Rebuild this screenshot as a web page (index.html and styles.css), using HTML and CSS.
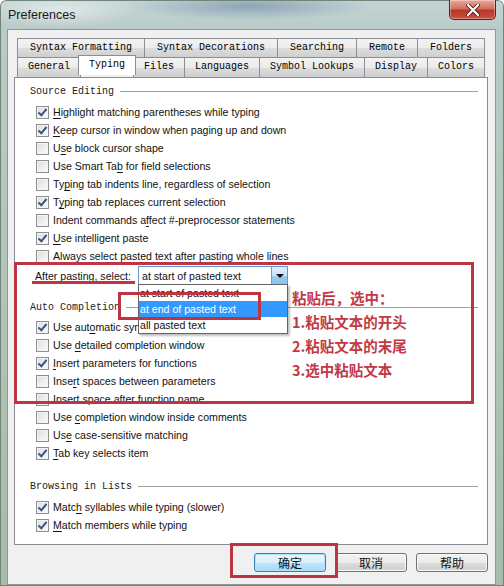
FILE: index.html
```html
<!DOCTYPE html>
<html lang="en">

<head>
    <meta charset="UTF-8">
    <title>Preferences</title>
    <link rel="stylesheet" href="styles.css">
</head>

<body>
    <div class="window">
        <div class="titlebar">
            <span class="title">Preferences</span>
            <div class="close-btn">
                <svg width="14" height="12" viewBox="0 0 14 12">
                    <path d="M2 1 L12 11 M12 1 L2 11" stroke="#6b1b1b" stroke-width="4" stroke-linecap="round" />
                    <path d="M2 1 L12 11 M12 1 L2 11" stroke="#ffffff" stroke-width="2.2" stroke-linecap="round" />
                </svg>
            </div>
        </div>

        <div class="client">
            <div class="tabs">
                <div class="tab-row">
                    <div class="tab">Syntax Formatting</div>
                    <div class="tab">Syntax Decorations</div>
                    <div class="tab">Searching</div>
                    <div class="tab">Remote</div>
                    <div class="tab">Folders</div>
                </div>
                <div class="tab-row">
                    <div class="tab">General</div>
                    <div class="tab active">Typing</div>
                    <div class="tab">Files</div>
                    <div class="tab">Languages</div>
                    <div class="tab">Symbol Lookups</div>
                    <div class="tab">Display</div>
                    <div class="tab">Colors</div>
                </div>
            </div>

            <div class="panel">
                <div class="group-title"><span>Source Editing</span></div>
                <div class="check on"><span class="box"></span><span class="text"><u>H</u>ighlight matching parentheses while typing</span></div>
                <div class="check on"><span class="box"></span><span class="text"><u>K</u>eep cursor in window when paging up and down</span></div>
                <div class="check"><span class="box"></span><span class="text">U<u>s</u>e block cursor shape</span></div>
                <div class="check"><span class="box"></span><span class="text">Use Smart Ta<u>b</u> for field selections</span></div>
                <div class="check"><span class="box"></span><span class="text">Ty<u>p</u>ing tab indents line, regardless of selection</span></div>
                <div class="check on"><span class="box"></span><span class="text">T<u>y</u>ping tab replaces current selection</span></div>
                <div class="check"><span class="box"></span><span class="text">Indent commands a<u>f</u>fect #-preprocessor statements</span></div>
                <div class="check on"><span class="box"></span><span class="text"><u>U</u>se intelligent paste</span></div>
                <div class="check"><span class="box"></span><span class="text">A<u>l</u>ways select pasted text after pasting whole lines</span></div>

                <div class="paste-row">
                    <span class="paste-label"><u>A</u>fter pasting, select:</span>
                    <div class="combo">
                        <span>at start of pasted text</span>
                        <span class="combo-btn"><span class="arrow"></span></span>
                    </div>
                </div>

                <div class="group-title second"><span>Auto Completion</span></div>
                <!-- the rest of this label sits under the open list -->
                <div class="check on"><span class="box"></span><span class="text">Use aut<u>o</u>matic syn</span></div>
                <div class="check"><span class="box"></span><span class="text">Use <u>d</u>etailed completion window</span></div>
                <div class="check on"><span class="box"></span><span class="text"><u>I</u>nsert parameters for functions</span></div>
                <div class="check"><span class="box"></span><span class="text">Inse<u>r</u>t spaces between parameters</span></div>
                <div class="check"><span class="box"></span><span class="text">Insert space after function name</span></div>
                <div class="check"><span class="box"></span><span class="text">Use <u>c</u>ompletion window inside comments</span></div>
                <div class="check"><span class="box"></span><span class="text">Us<u>e</u> case-sensitive matching</span></div>
                <div class="check on"><span class="box"></span><span class="text"><u>T</u>ab key selects item</span></div>

                <div class="group-title third"><span>Browsing in Lists</span></div>
                <div class="check on"><span class="box"></span><span class="text">Matc<u>h</u> syllables while typing (slower)</span></div>
                <div class="check on"><span class="box"></span><span class="text"><u>M</u>atch members while typing</span></div>
            </div>

            <div class="buttons">
                <button class="btn default">确定</button>
                <button class="btn">取消</button>
                <button class="btn">帮助</button>
            </div>
        </div>

        <!-- dropdown list of the combo, open -->
        <div class="dropdown">
            <div class="item">at start of pasted text</div>
            <div class="item selected">at end of pasted text</div>
            <div class="item">all pasted text</div>
        </div>

        <!-- red annotations -->
        <div class="mark mark-area"></div>
        <div class="mark mark-item"></div>
        <div class="mark mark-ok"></div>
        <div class="mark-line"></div>

        <div class="note">
            <p>粘贴后，选中：</p>
            <p>1.粘贴文本的开头</p>
            <p>2.粘贴文本的末尾</p>
            <p>3.选中粘贴文本</p>
        </div>
    </div>
</body>

</html>
```

FILE: styles.css
```css
body {
    margin: 0;
    padding: 0;
    font-family: "Liberation Sans", Arial, sans-serif;
    font-size: 10.6px;
    color: #111;
}

.window {
    position: relative;
    width: 504px;
    height: 586px;
    overflow: hidden;
    background:
        radial-gradient(ellipse 120px 14px at 250px 6px, rgba(80, 110, 150, 0.45), transparent),
        radial-gradient(ellipse 80px 18px at 60px 10px, rgba(255, 255, 255, 0.5), transparent),
        linear-gradient(to bottom, #c4d4d6 0px, #b9cbc8 30px, #b2c4b6 300px, #a6bba9 586px);
    border-radius: 6px 6px 0 0;
    box-shadow: inset 0 0 0 1px #6f8577;
}

.titlebar {
    height: 29px;
    display: flex;
    align-items: flex-start;
    justify-content: space-between;
}

.title {
    margin: 8px 0 0 8px;
    font-size: 12.5px;
    color: #1a1a1a;
}

.close-btn {
    width: 45px;
    height: 19px;
    margin-right: 8px;
    border: 1px solid #5c1e1e;
    border-top: none;
    border-radius: 0 0 5px 5px;
    background: linear-gradient(to bottom, #e9a898 0%, #d2705e 45%, #b9362a 55%, #c94f3d 100%);
    display: flex;
    align-items: center;
    justify-content: center;
    box-shadow: inset 0 0 0 1px rgba(255, 255, 255, 0.35);
}

.client {
    margin: 0 8px 0 7px;
    height: 546px;
    background-color: #f0f0f0;
    border: 1px solid #8a9a92;
    padding: 8px 7px 0 6px;
}

/* tabs */

.tabs {
    margin: 0 3px 0 4px;
    position: relative;
    z-index: 1;
    font-family: "Liberation Mono", "Courier New", monospace;
    font-size: 10px;
    color: #000;
}

.tab-row {
    display: flex;
}

.tab {
    flex: 1 1 auto;
    height: 18px;
    line-height: 18px;
    text-align: center;
    border: 1px solid #8c8e94;
    border-bottom: none;
    margin-left: -1px;
    background: linear-gradient(to bottom, #f3f3f3 0%, #ebebeb 50%, #dddddd 51%, #cfcfcf 100%);
    white-space: pre;
}

.tab-row + .tab-row .tab {
    height: 19px;
    line-height: 18px;
}

.tab.active {
    background: #fff;
    height: 22px;
    line-height: 18px;
    margin-top: -2px;
    margin-left: -3px;
    margin-right: -2px;
    position: relative;
    z-index: 2;
}

.panel {
    height: 468px;
    box-sizing: border-box;
    background-color: #fff;
    border: 1px solid #898c95;
    padding: 6px 9px 0 15px;
}

.group-title {
    display: flex;
    align-items: center;
    height: 14px;
    font-family: "Liberation Mono", "Courier New", monospace;
    font-size: 10px;
    color: #222;
    margin-bottom: 5px;
}

.group-title::after {
    content: "";
    flex: 1;
    height: 1px;
    background-color: #a0a0a0;
    margin-left: 6px;
}

.group-title.second {
    margin-top: 15px;
    margin-bottom: 4px;
}

.group-title.third {
    margin-top: 17px;
    margin-bottom: 5px;
}

.check {
    display: flex;
    align-items: center;
    height: 18px;
    padding-left: 6px;
    white-space: nowrap;
}

.text {
    white-space: pre;
}

.box {
    position: relative;
    width: 11px;
    height: 11px;
    border: 1px solid #8f8f8f;
    background: linear-gradient(135deg, #dcdcdc 0%, #f0f0f0 60%, #fbfbfb 100%);
    box-shadow: inset 0 0 0 1px #f4f4f4;
    margin-right: 4px;
    flex: none;
}

.check.on .box::after {
    content: "";
    position: absolute;
    left: 3px;
    top: 0px;
    width: 3px;
    height: 7px;
    border-right: 2px solid #3c5486;
    border-bottom: 2px solid #3c5486;
    transform: rotate(40deg);
}

u {
    text-decoration-thickness: 1px;
    text-underline-offset: 2px;
}

.paste-row {
    display: flex;
    align-items: center;
    height: 19px;
    margin-top: 1px;
}

.paste-label {
    padding-left: 5px;
    width: 103px;
    white-space: nowrap;
}

.combo {
    width: 145px;
    height: 17px;
    border: 1px solid #5b9bd0;
    display: flex;
    align-items: center;
    justify-content: space-between;
    padding-left: 3px;
    background: #fff;
}

.combo-btn {
    width: 15px;
    height: 17px;
    border-left: 1px solid #6a9fc9;
    background: linear-gradient(to bottom, #e3f1fb 0%, #c6e2f6 50%, #9dcbed 51%, #8ec2e8 100%);
    display: flex;
    align-items: center;
    justify-content: center;
}

.arrow {
    width: 0;
    height: 0;
    border-left: 4px solid transparent;
    border-right: 4px solid transparent;
    border-top: 4px solid #111;
}

/* buttons */

.buttons {
    display: flex;
    justify-content: flex-end;
    gap: 9px;
    margin-top: 8px;
}

.btn {
    width: 72px;
    height: 19px;
    padding: 0;
    font-family: "Noto Sans CJK SC", sans-serif;
    font-size: 12px;
    line-height: 17px;
    color: #111;
    border: 1px solid #707070;
    border-radius: 3px;
    background: linear-gradient(to bottom, #f2f2f2 0%, #ebebeb 50%, #dddddd 51%, #cfcfcf 100%);
    box-shadow: inset 0 0 0 1px #fbfbfb;
}

.btn.default {
    border-color: #3c7fb1;
    background: linear-gradient(to bottom, #eaf6fd 0%, #d9f0fc 50%, #bee6fd 51%, #a7d9f5 100%);
    box-shadow: inset 0 0 0 1px #aee4f7;
}

/* open dropdown */

.dropdown {
    position: absolute;
    left: 138px;
    top: 284px;
    width: 148px;
    border: 1px solid #646464;
    background: #fff;
    box-shadow: 2px 2px 2px rgba(0, 0, 0, 0.25);
    z-index: 3;
}

.dropdown .item {
    height: 16px;
    line-height: 16px;
    padding-left: 1px;
}

.dropdown .item.selected {
    background-color: #3399ff;
    color: #fff;
}

/* annotations */

.mark {
    position: absolute;
    box-sizing: border-box;
    border: 3px solid #bd3442;
    z-index: 4;
}

.mark-area {
    left: 14px;
    top: 262px;
    width: 460px;
    height: 142px;
}

.mark-item {
    left: 118px;
    top: 292px;
    width: 143px;
    height: 28px;
}

.mark-ok {
    left: 230px;
    top: 543px;
    width: 108px;
    height: 35px;
}

.mark-line {
    position: absolute;
    left: 32px;
    top: 281px;
    width: 103px;
    height: 3px;
    background-color: #bd3442;
    z-index: 4;
}

.note {
    position: absolute;
    left: 292px;
    top: 287px;
    z-index: 4;
    font-family: "Noto Sans CJK SC", sans-serif;
    font-weight: bold;
    font-size: 14.5px;
    color: #c23845;
    text-shadow: 0 0 2px #fff, 0 0 2px #fff;
}

.note p {
    margin: 0;
    height: 24px;
    line-height: 22px;
}
```
